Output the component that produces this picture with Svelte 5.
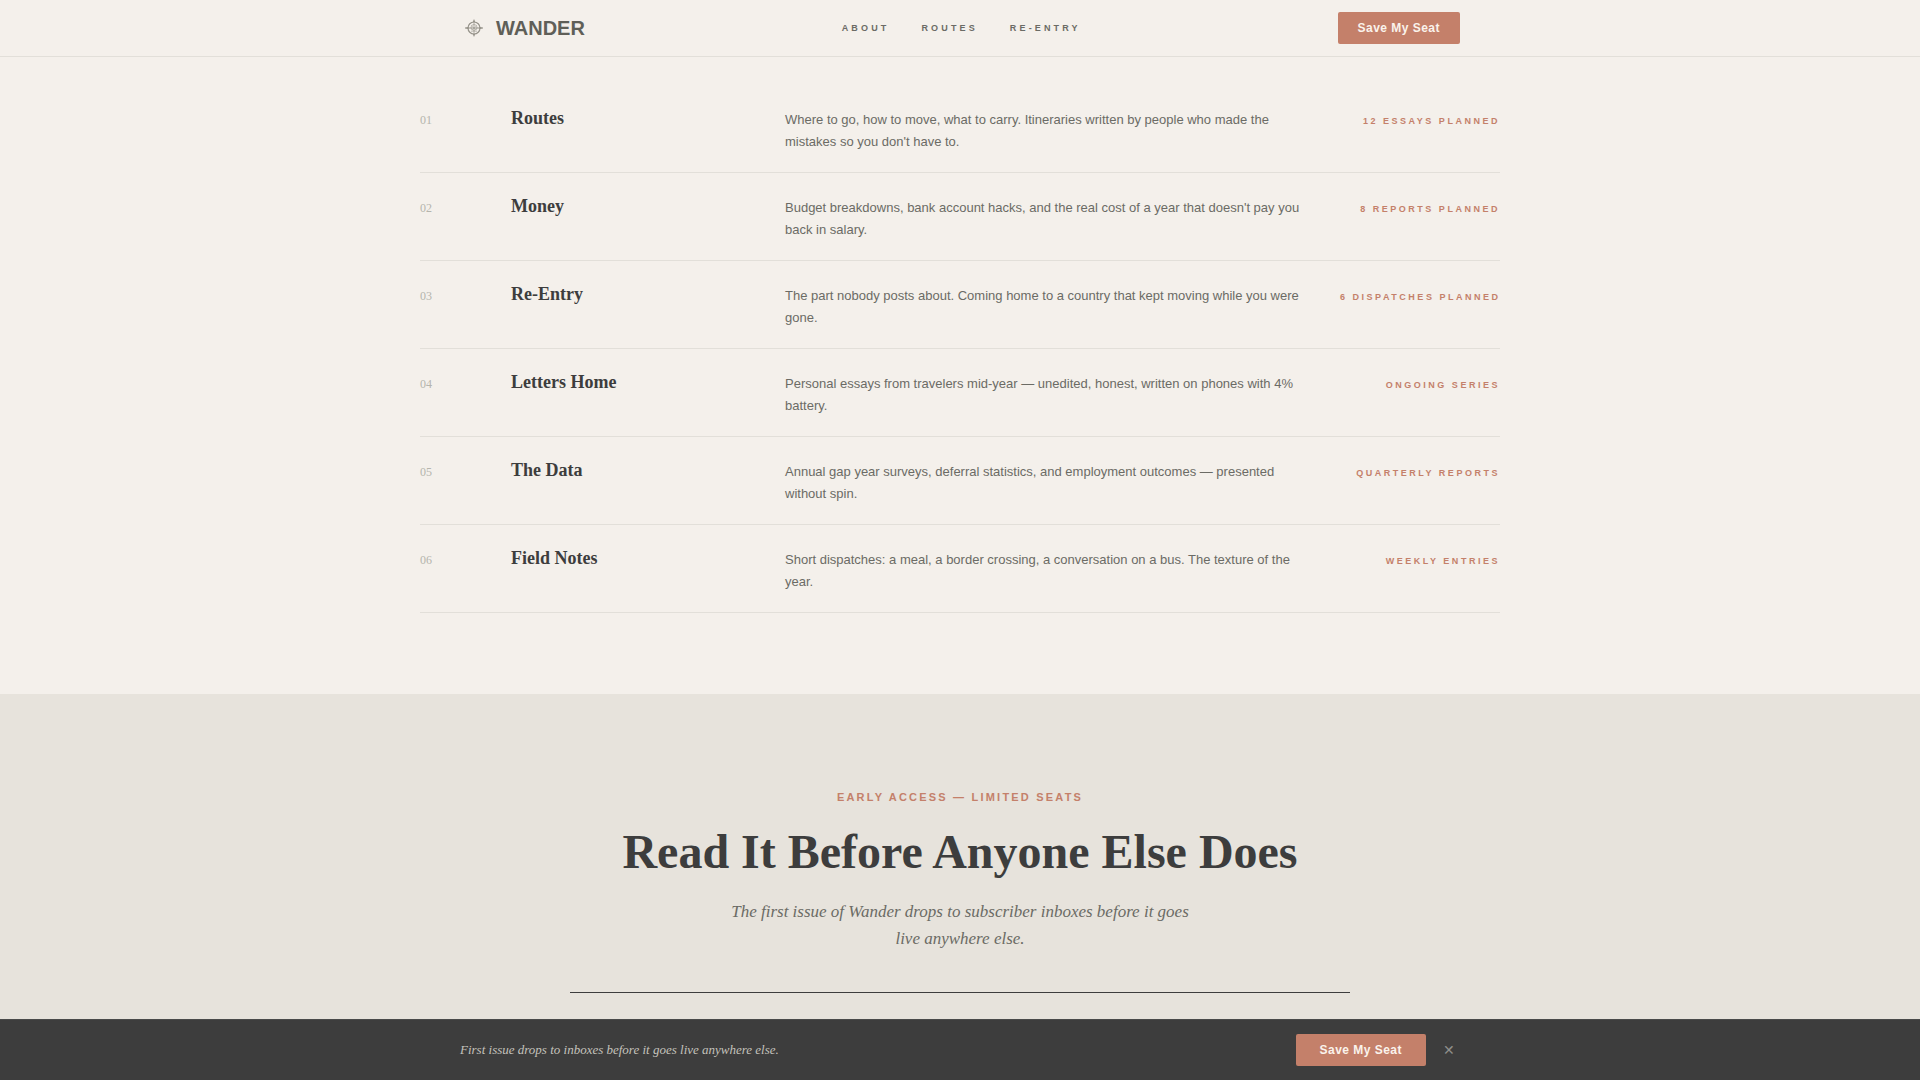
<script lang="ts">
  const links = [
    { label: 'About', href: '#about' },
    { label: 'Routes', href: '#routes' },
    { label: 'Re-Entry', href: '#re-entry' }
  ];

  const topics = [
    {
      title: 'Routes',
      text: "Where to go, how to move, what to carry. Itineraries written by people who made the mistakes so you don't have to.",
      tag: '12 essays planned'
    },
    {
      title: 'Money',
      text: "Budget breakdowns, bank account hacks, and the real cost of a year that doesn't pay you back in salary.",
      tag: '8 reports planned'
    },
    {
      title: 'Re-Entry',
      text: 'The part nobody posts about. Coming home to a country that kept moving while you were gone.',
      tag: '6 dispatches planned'
    },
    {
      title: 'Letters Home',
      text: 'Personal essays from travelers mid-year — unedited, honest, written on phones with 4% battery.',
      tag: 'Ongoing series'
    },
    {
      title: 'The Data',
      text: 'Annual gap year surveys, deferral statistics, and employment outcomes — presented without spin.',
      tag: 'Quarterly reports'
    },
    {
      title: 'Field Notes',
      text: 'Short dispatches: a meal, a border crossing, a conversation on a bus. The texture of the year.',
      tag: 'Weekly entries'
    }
  ];

  let barOpen = $state(true);
</script>

<div class="page">
  <header class="nav">
    <div class="nav-inner">
      <a class="brand" href="#top">
        <svg class="brand-mark" viewBox="0 0 28 28" fill="none" stroke="currentColor" aria-hidden="true">
          <circle cx="14" cy="14" r="6" stroke-width="1.2" />
          <circle cx="14" cy="13.5" r="3" stroke-width="0.6" />
          <path d="M5 14h18" stroke-width="1" />
          <path d="M14 5.500v17" stroke-width="0.7" />
          <path d="M11 17.500h6M11.500 11.500l5 5M16.500 11.500l-5 5" stroke-width="0.4" />
          <path d="M5 14l3.500-1.300v2.600zM23 14l-3.500-1.300v2.600zM14 5.500l-1.200 2.500h2.400zM14 22.500l-1.200-2.500h2.400z" fill="currentColor" stroke="none" />
        </svg>
        <span>WANDER</span>
      </a>
      <nav class="links">
        {#each links as link}
          <a href={link.href}>{link.label}</a>
        {/each}
      </nav>
      <button type="button" class="btn">Save My Seat</button>
    </div>
  </header>

  <main>
    <section class="topics" id="routes">
      {#each topics as topic, i}
        <article class="topic">
          <span class="num">0{i + 1}</span>
          <h3>{topic.title}</h3>
          <p>{topic.text}</p>
          <span class="tag">{topic.tag}</span>
        </article>
      {/each}
    </section>

    <section class="signup">
      <span class="eyebrow">Early Access — Limited Seats</span>
      <h2>Read It Before Anyone Else Does</h2>
      <p class="lede">The first issue of Wander drops to subscriber inboxes before it goes live anywhere else.</p>
      <div class="panel"></div>
    </section>
  </main>

  {#if barOpen}
    <aside class="bar">
      <div class="bar-inner">
        <p>First issue drops to inboxes before it goes live anywhere else.</p>
        <div class="bar-actions">
          <button type="button" class="btn wide">Save My Seat</button>
          <button type="button" class="close" aria-label="Dismiss" onclick={() => (barOpen = false)}>✕</button>
        </div>
      </div>
    </aside>
  {/if}
</div>

<style>
  :global(body) {
    margin: 0;
    background: #f4f0eb;
  }

  .page {
    --ink: #3d3d3d;
    --soft: #6b6b65;
    --line: #e2dfd9;
    --clay: #c4806a;
    --serif: 'Liberation Serif', serif;
    display: flex;
    flex-direction: column;
    min-height: 100vh;
    color: var(--ink);
    font-family: 'Liberation Sans', sans-serif;
  }

  h2,
  h3,
  p {
    margin: 0;
  }

  .nav {
    position: sticky;
    top: 0;
    z-index: 2;
    background: #f4f0eb;
    border-bottom: 1px solid var(--line);
  }

  .nav-inner,
  .bar-inner {
    box-sizing: border-box;
    max-width: 1080px;
    margin: 0 auto;
    padding: 12px 40px;
    display: flex;
    align-items: center;
    justify-content: space-between;
  }

  .brand {
    display: flex;
    align-items: center;
    gap: 8px;
    color: #5f5f58;
    font-size: 20px;
    font-weight: 700;
    line-height: 28px;
    text-decoration: none;
  }

  .brand-mark {
    width: 28px;
    height: 28px;
    color: #96938a;
  }

  .links {
    display: flex;
    gap: 32px;
  }

  .links a {
    color: var(--soft);
    font-size: 9px;
    font-weight: 700;
    letter-spacing: 0.35em;
    text-transform: uppercase;
    text-decoration: none;
  }

  .btn {
    height: 32px;
    padding: 0 20px;
    border: 0;
    border-radius: 2px;
    background: var(--clay);
    color: #faf3ec;
    font-family: inherit;
    font-size: 12px;
    font-weight: 700;
    letter-spacing: 0.04em;
    cursor: pointer;
  }

  .btn.wide {
    padding: 0 24px;
  }

  main {
    flex: 1;
    display: flex;
    flex-direction: column;
  }

  .topics {
    box-sizing: border-box;
    width: 100%;
    max-width: 1080px;
    margin: 0 auto;
    padding: 28px 0 81px;
  }

  .topic {
    display: grid;
    grid-template-columns: 67px 250px minmax(0, 1fr) 160px;
    column-gap: 24px;
    align-items: baseline;
    padding: 22px 0 19px;
    border-bottom: 1px solid var(--line);
  }

  .num {
    color: #b5b5ad;
    font-family: var(--serif);
    font-size: 12px;
  }

  .topic h3 {
    font-family: var(--serif);
    font-size: 18px;
    line-height: 22px;
  }

  .topic p {
    color: var(--soft);
    font-size: 13px;
    line-height: 22px;
  }

  .tag {
    color: var(--clay);
    font-size: 9px;
    font-weight: 700;
    letter-spacing: 0.28em;
    text-align: right;
    text-transform: uppercase;
    white-space: nowrap;
  }

  .signup {
    flex: 1;
    display: flex;
    flex-direction: column;
    align-items: center;
    padding: 96px 40px 0;
    background: #e7e3dc;
    text-align: center;
  }

  .eyebrow {
    color: var(--clay);
    font-size: 11px;
    font-weight: 700;
    line-height: 14px;
    letter-spacing: 0.2em;
    text-transform: uppercase;
  }

  .signup h2 {
    margin-top: 20px;
    font-family: var(--serif);
    font-size: 48px;
    line-height: 56px;
  }

  .lede {
    max-width: 480px;
    margin: 18px 0 40px;
    color: var(--soft);
    font-family: var(--serif);
    font-size: 17px;
    font-style: italic;
    line-height: 27px;
  }

  .panel {
    width: 100%;
    max-width: 780px;
    border-top: 1px solid var(--ink);
  }

  .bar {
    position: sticky;
    bottom: 0;
    background: var(--ink);
    border-top: 1px solid #4a4a4a;
  }

  .bar-inner {
    padding: 14px 40px;
  }

  .bar p {
    color: #c4c2bc;
    font-family: var(--serif);
    font-size: 13px;
    font-style: italic;
  }

  .bar-actions {
    display: flex;
    align-items: center;
    gap: 12px;
  }

  .close {
    padding: 4px 5px;
    border: 0;
    background: none;
    color: #8f8f8b;
    font-family: inherit;
    font-size: 14px;
    line-height: 16px;
    cursor: pointer;
  }
</style>
